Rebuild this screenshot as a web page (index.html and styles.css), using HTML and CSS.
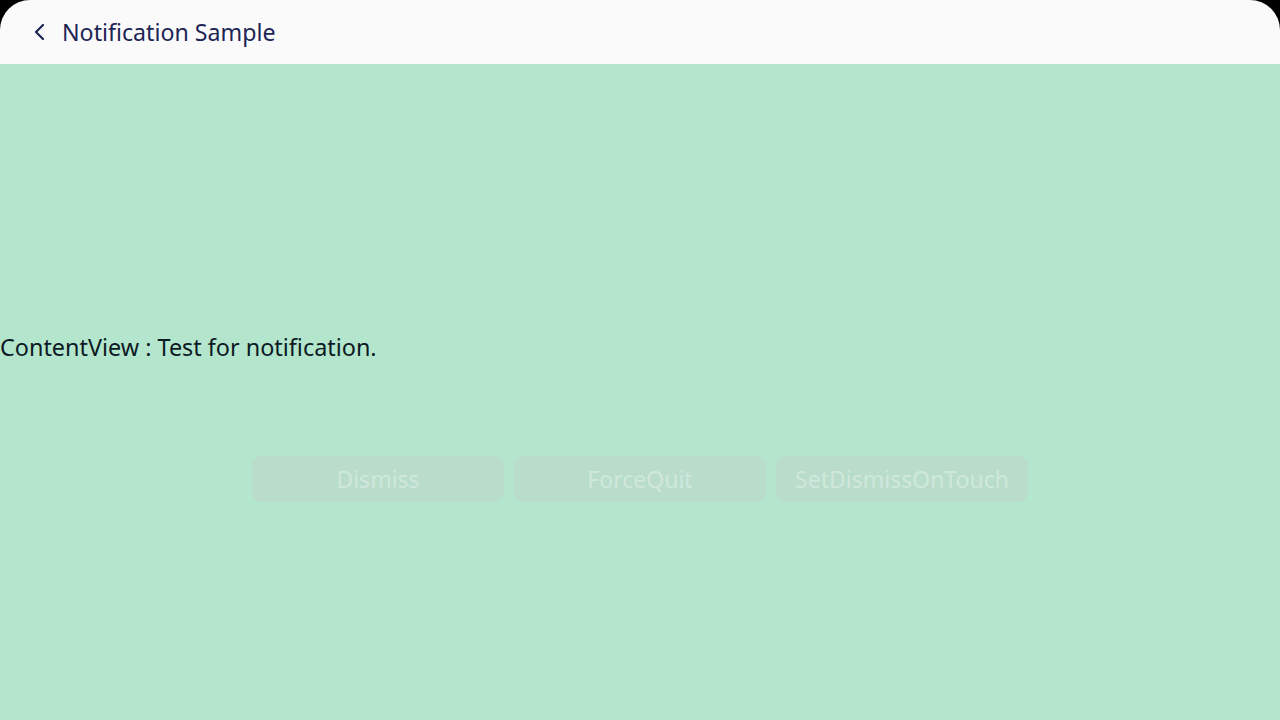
FILE: index.html
```html
<!DOCTYPE html>
<html lang="en">
<head>
<meta charset="utf-8">
<title>Notification Sample</title>
<link rel="stylesheet" href="styles.css">
</head>
<body>
<div class="app">
  <header class="header">
    <svg class="back" width="14" height="18" viewBox="0 0 14 18" aria-hidden="true">
      <path d="M11 2 L4 9 L11 16" fill="none" stroke="#1c2554" stroke-width="2.2" stroke-linecap="round" stroke-linejoin="round"/>
    </svg>
    <h1 class="title">Notification Sample</h1>
  </header>
  <main class="content">
    <p class="content-text">ContentView : Test for notification.</p>
    <div class="buttons">
      <button class="btn">Dismiss</button>
      <button class="btn">ForceQuit</button>
      <button class="btn">SetDismissOnTouch</button>
    </div>
  </main>
</div>
</body>
</html>
```

FILE: styles.css
```css
html, body {
  margin: 0;
  padding: 0;
  background: #000;
  width: 1280px;
  height: 720px;
  overflow: hidden;
}
.app {
  display: flex;
  flex-direction: column;
  height: 720px;
  font-family: "Noto Sans", "Open Sans", sans-serif;
}
.header {
  height: 64px;
  flex: 0 0 64px;
  background: #fafafa;
  border-radius: 30px 30px 0 0;
  display: flex;
  align-items: center;
  padding-left: 32px;
  box-sizing: border-box;
}
.back {
  display: block;
  margin-right: 16px;
}
.title {
  margin: 0;
  font-size: 23.2px;
  font-weight: 400;
  color: #1c2554;
  line-height: 32px;
}
.content {
  flex: 1;
  background: #b3e6cd;
  display: flex;
  flex-direction: column;
  padding-top: 267px;
  gap: 93px;
}
.content-text {
  margin: 0;
  font-size: 23.4px;
  line-height: 32px;
  color: #0d1a24;
}
.buttons {
  display: flex;
  justify-content: center;
  gap: 10px;
}
.btn {
  width: 252px;
  height: 46px;
  border: none;
  border-radius: 10px;
  background: #b9dccb;
  color: #d0e8dc;
  font-family: "Noto Sans", "Open Sans", sans-serif;
  font-size: 23px;
  padding: 0;
}
```
